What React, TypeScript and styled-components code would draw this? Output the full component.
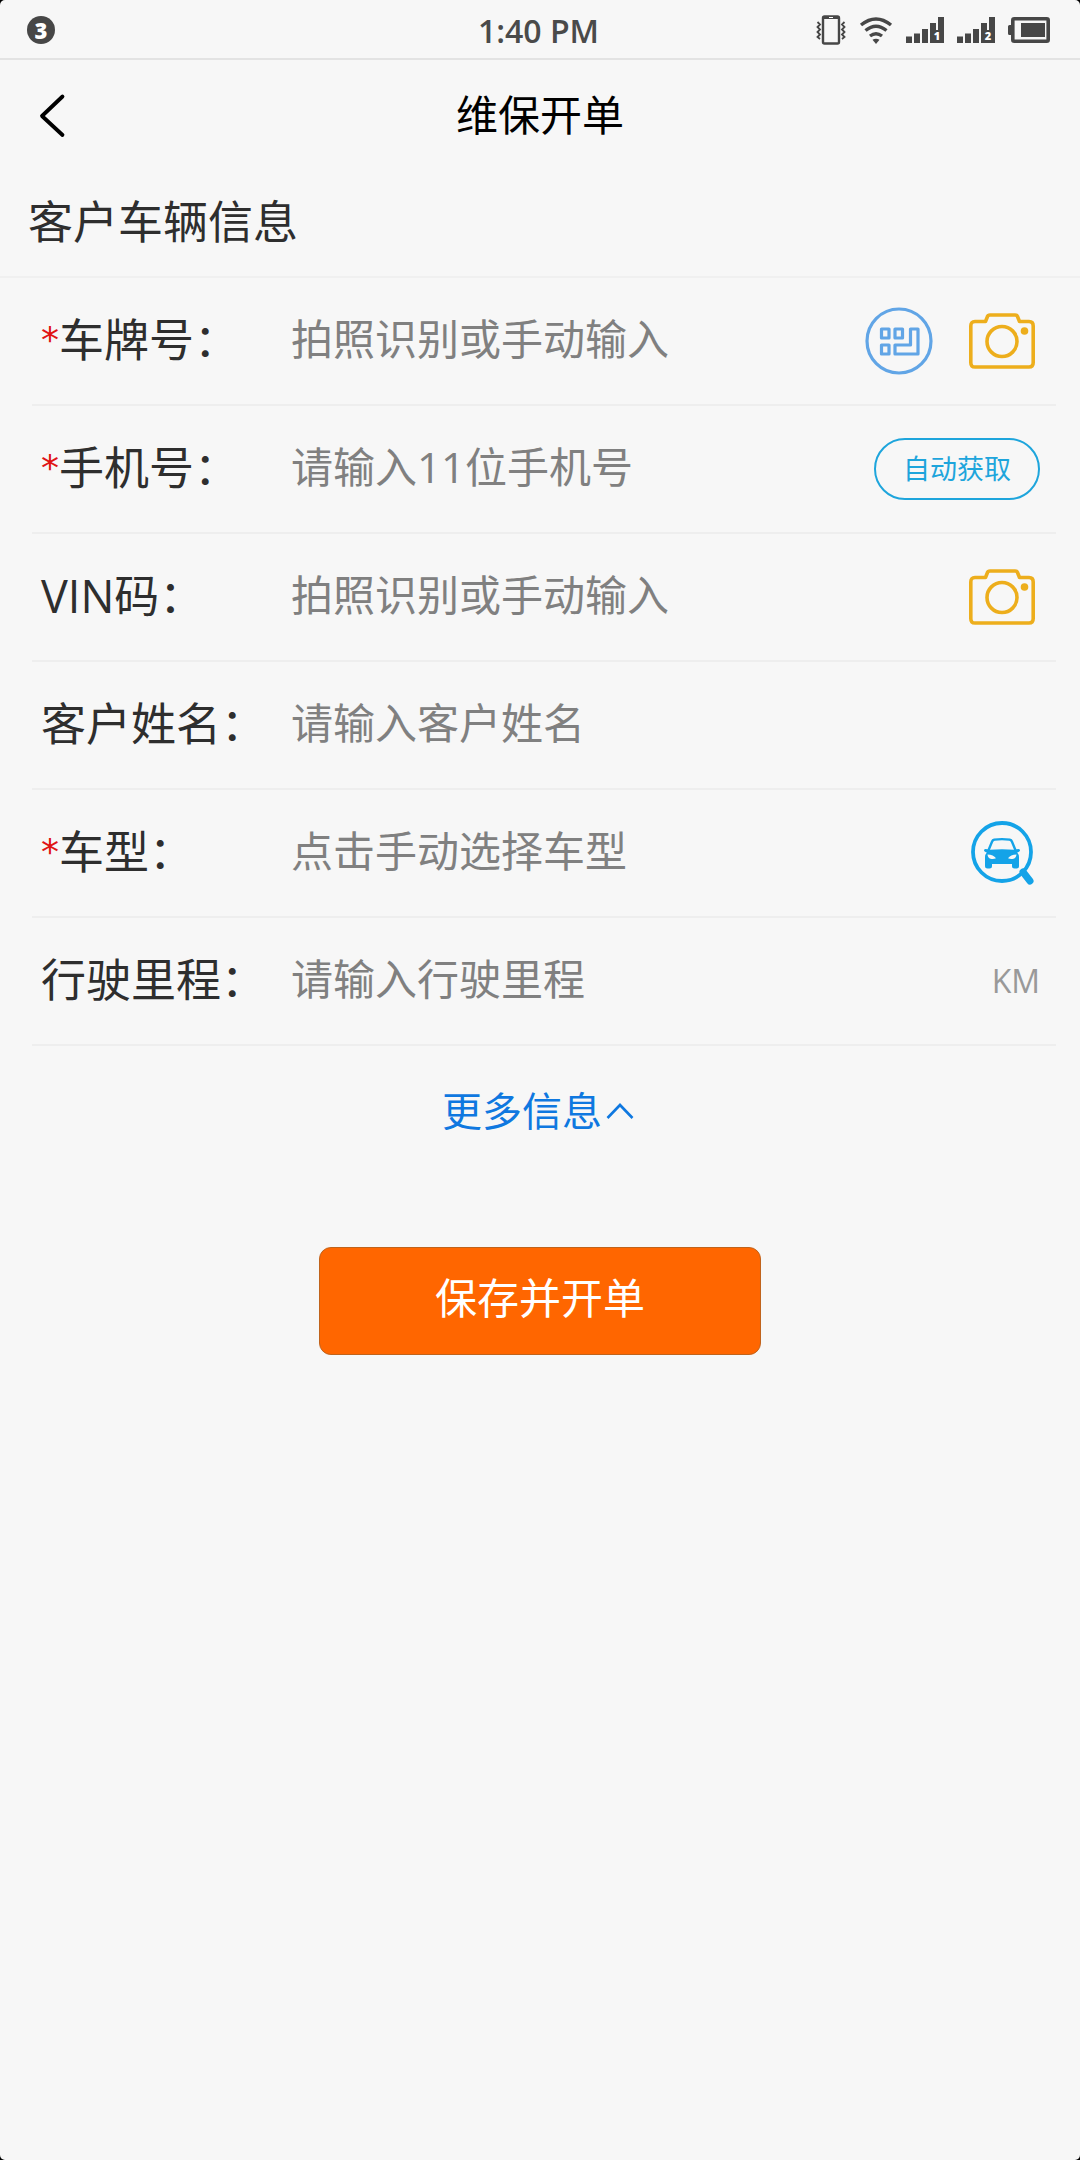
import React, { useState } from 'react';
import styled, { createGlobalStyle } from 'styled-components';

const GlobalStyle = createGlobalStyle`
  * { box-sizing: border-box; }
  html { background: #000; }
  body { margin: 0; font-family: "Open Sans", "Noto Sans CJK SC", sans-serif; }
  button, input { font: inherit; margin: 0; padding: 0; border: 0; background: none; }
  button { cursor: pointer; }
  svg { display: block; flex: none; }
`;

const Screen = styled.main`
  min-height: 100vh;
  background: #f7f7f7;
  border-radius: 5px;
  color: #2e2e2e;
`;

const StatusBar = styled.div`
  display: grid;
  grid-template-columns: 1fr auto 1fr;
  align-items: center;
  height: 60px;
  padding: 2px 30px 0 27px;
  border-bottom: 2px solid #e3e3e3;
  color: #4a4a4a;
`;

const NoticeCount = styled.span`
  display: grid;
  place-items: center;
  width: 28px;
  height: 28px;
  border-radius: 50%;
  background: #474747;
  color: #fff;
  font-size: 22px;
  font-weight: 800;
  line-height: 28px;
`;

const Clock = styled.time`
  padding-top: 2px;
  font-size: 32px;
  font-weight: 600;
  line-height: 44px;
`;

const StatusIcons = styled.div`
  display: flex;
  justify-content: flex-end;
  align-items: center;
  gap: 13px;
`;

const Header = styled.header`
  display: grid;
  grid-template-columns: 1fr auto 1fr;
  align-items: center;
  height: 110px;
  padding: 0 32px;
`;

const BackButton = styled.button`
  justify-self: start;
  color: #000;
`;

const Title = styled.h1`
  margin: 0;
  color: #000;
  font-size: 42px;
  font-weight: 400;
  line-height: 60px;
`;

const SectionTitle = styled.h2`
  margin: 0;
  padding: 19px 28px 21px;
  border-bottom: 2px solid #f0f0f0;
  font-size: 45px;
  font-weight: 400;
  line-height: 66px;
`;

const Form = styled.form`
  display: flex;
  flex-direction: column;
`;

const Row = styled.div`
  display: flex;
  align-items: center;
  height: 128px;
  margin: 0 24px 0 32px;
  padding: 0 16px 0 9px;
  border-bottom: 2px solid #eee;
`;

const Label = styled.label`
  width: 250px;
  flex: none;
  padding-bottom: 2px;
  font-size: 45px;
  line-height: 66px;
  white-space: nowrap;
`;

const Required = styled.span`
  color: #e01414;
  font-family: "DejaVu Sans", sans-serif;
  font-size: 36px;
  line-height: 1;
  vertical-align: 5px;
`;

const Field = styled.input`
  flex: 1;
  min-width: 0;
  height: 66px;
  padding-bottom: 5px;
  color: #2e2e2e;
  font-size: 42px;
  outline: none;
  &::placeholder { color: #808080; opacity: 1; }
`;

const Actions = styled.div<{ $inset?: boolean }>`
  display: flex;
  align-items: center;
  gap: 36px;
  padding-right: ${(p) => (p.$inset ? '5px' : '0')};
`;

const IconButton = styled.button`
  display: block;
`;

const PillButton = styled.button`
  height: 62px;
  padding: 0 27px;
  border: 2px solid #1ea5dc;
  border-radius: 31px;
  color: #1ea5dc;
  font-size: 27px;
  line-height: 40px;
`;

const Unit = styled.span`
  color: #999;
  font-size: 32px;
  line-height: 44px;
`;

const MoreButton = styled.button`
  display: flex;
  align-items: center;
  align-self: center;
  gap: 4px;
  margin-top: 35px;
  padding-right: 4px;
  color: #0f78e0;
  font-size: 40px;
  line-height: 60px;
`;

const SubmitButton = styled.button`
  align-self: center;
  width: 41%;
  height: 108px;
  margin-top: 106px;
  padding-bottom: 7px;
  border: 1px solid #c0631c;
  border-radius: 12px;
  background: #f60;
  color: #fff;
  font-size: 42px;
  line-height: 60px;
`;

const VibrateIcon = () => (
  <svg width="30" height="30" viewBox="0 0 30 30" fill="none" stroke="#474747" aria-hidden="true">
    <rect x="7" y="1.5" width="16" height="27" rx="1.5" strokeWidth="2.4" />
    <path d="M7 2.5h16" strokeWidth="3" />
    <path d="M13 2.5h4" stroke="#fff" strokeWidth="1" />
    <path d="M1.5 7l2.5 2.5L1.5 12 4 14.5 1.5 17 4 19.5 1.5 22 4 24M28.5 7 26 9.500l2.500 2.500-2.500 2.500 2.500 2.500-2.500 2.500 2.500 2.500-2.500 2" strokeWidth="1.8" />
  </svg>
);

const WifiIcon = () => (
  <svg width="34" height="28" viewBox="0 0 34 28" fill="none" stroke="#474747" strokeWidth="3.4" aria-hidden="true">
    <path d="M2 9Q17-3 32 9M6.500 14.500Q17 6 27.500 14.500M11 20q6-4.500 12 0" />
    <path d="M13.500 23.700q3.500-2 7 0L17 28z" fill="#474747" stroke="none" />
  </svg>
);

const SignalIcon = ({ sim }: { sim: number }) => (
  <svg width="38" height="38" viewBox="0 -6 38 38" fill="#474747" aria-hidden="true">
    <path d="M0 19.500h6V26H0zM8 16.500h6V26H8zM16 12h6v14h-6zM24 6h6v20h-6zM32 0h6v26H26V12h6z" />
    <path d="M31 6v7" stroke="#f7f7f7" strokeWidth="2" />
    <text x="31" y="23" fill="#fff" fontSize="11" fontWeight="800" textAnchor="middle">{sim}</text>
  </svg>
);

const BatteryIcon = () => (
  <svg width="42" height="26" viewBox="0 0 42 26" aria-hidden="true">
    <rect x="4.8" y="1.8" width="35.4" height="22.4" rx="1.5" fill="none" stroke="#474747" strokeWidth="3.6" />
    <path d="M3 8H1.500Q0 8 0 9.500v7Q0 18 1.500 18H3zM13 6h24v14H13z" fill="#474747" />
  </svg>
);

const BackIcon = () => (
  <svg width="40" height="48" viewBox="0 0 40 48" fill="none" stroke="currentColor" strokeWidth="3.8" strokeLinecap="round" strokeLinejoin="round" aria-hidden="true">
    <path d="M30.500 5.500 10 25l20.500 19" />
  </svg>
);

const PlateIcon = () => (
  <svg width="68" height="68" viewBox="0 0 68 68" fill="none" stroke="#61a5e6" strokeWidth="3.2" strokeLinejoin="round" aria-hidden="true">
    <circle cx="34" cy="34" r="32" />
    <path d="M16.500 22h7.500v9h-7.500zM30 22h7.500v9H30zM16.500 38h7.500v9h-7.500zM45.500 22H53v25H30v-9h15.500z" />
  </svg>
);

const CameraIcon = () => (
  <svg width="66" height="56" viewBox="0 0 66 56" fill="none" stroke="#edae1c" strokeWidth="3.6" strokeLinejoin="round" aria-hidden="true">
    <path d="M16.500 8.500 18.500 3.500Q19 2 21 2h25q2 0 2.500 1.500l2 5H60q4.200 0 4.200 4.500v36.500Q64.200 54 60 54H6q-4.200 0-4.200-4.500V13Q1.800 8.500 6 8.500z" />
    <circle cx="33" cy="28.5" r="15" />
    <circle cx="55.5" cy="18" r="3.8" fill="#edae1c" stroke="none" />
  </svg>
);

const CarSearchIcon = () => (
  <svg width="64" height="64" viewBox="0 0 64 64" fill="none" stroke="#14a3e8" aria-hidden="true">
    <circle cx="31" cy="31" r="29" strokeWidth="3.8" />
    <path d="m52 51 7 9" strokeWidth="7" strokeLinecap="round" />
    <path fill="#14a3e8" fillRule="evenodd" stroke="none" d="M20 20q.8-2 3-2.400 8-1.200 16 0 2.200.4 3 2.400l3.400 8.300 2.300-.3q1.500.2 1.300 1.600-.3 1.400-2 1.600l-.8.200q1.800 2 1.800 4.600v9q0 2.500-2.500 2.500h-2q-2.500 0-2.500-2.500v-2H21v2q0 2.500-2.500 2.500h-2Q14 47.500 14 45v-9q0-2.600 1.800-4.600l-.8-.2q-1.700-.2-2-1.600-.2-1.400 1.300-1.600l2.300.3zm2.200 1L19 28.800q12-1.300 24 0L39.800 21q-.4-1-1.500-1.200-7.300-1-14.600 0-1.100.2-1.500 1.200zM16.500 33.500q.3 3.500 3 4.200 3 .6 5.500-.4-2.500-3.500-8.500-3.800zm29 0q-.3 3.500-3 4.200-3 .6-5.500-.4 2.500-3.500 8.500-3.800z" />
  </svg>
);

const ChevronUp = () => (
  <svg width="28" height="18" viewBox="0 0 28 18" fill="none" stroke="currentColor" strokeWidth="2.6" aria-hidden="true">
    <path d="M1.500 16 14 3l12.500 13" />
  </svg>
);

type FieldRowProps = {
  id: string;
  label: string;
  placeholder: string;
  required?: boolean;
  inset?: boolean;
  children?: React.ReactNode;
};

const FieldRow = ({ id, label, placeholder, required, inset, children }: FieldRowProps) => {
  const [value, setValue] = useState('');
  return (
    <Row>
      <Label htmlFor={id}>
        {required && <Required>*</Required>}
        {label}：
      </Label>
      <Field id={id} value={value} placeholder={placeholder} required={required} onChange={(e) => setValue(e.target.value)} />
      {children && <Actions $inset={inset}>{children}</Actions>}
    </Row>
  );
};

export default function App() {
  return (
    <>
      <GlobalStyle />
      <Screen lang="zh-CN">
        <StatusBar>
          <NoticeCount>3</NoticeCount>
          <Clock>1:40 PM</Clock>
          <StatusIcons>
            <VibrateIcon />
            <WifiIcon />
            <SignalIcon sim={1} />
            <SignalIcon sim={2} />
            <BatteryIcon />
          </StatusIcons>
        </StatusBar>
        <Header>
          <BackButton type="button" aria-label="返回"><BackIcon /></BackButton>
          <Title>维保开单</Title>
        </Header>
        <SectionTitle>客户车辆信息</SectionTitle>
        <Form onSubmit={(e) => e.preventDefault()}>
          <FieldRow id="plate" label="车牌号" placeholder="拍照识别或手动输入" required inset>
            <IconButton type="button" aria-label="键盘输入"><PlateIcon /></IconButton>
            <IconButton type="button" aria-label="拍照"><CameraIcon /></IconButton>
          </FieldRow>
          <FieldRow id="phone" label="手机号" placeholder="请输入11位手机号" required>
            <PillButton type="button">自动获取</PillButton>
          </FieldRow>
          <FieldRow id="vin" label="VIN码" placeholder="拍照识别或手动输入" inset>
            <IconButton type="button" aria-label="拍照"><CameraIcon /></IconButton>
          </FieldRow>
          <FieldRow id="name" label="客户姓名" placeholder="请输入客户姓名" />
          <FieldRow id="model" label="车型" placeholder="点击手动选择车型" required inset>
            <IconButton type="button" aria-label="选择车型"><CarSearchIcon /></IconButton>
          </FieldRow>
          <FieldRow id="mileage" label="行驶里程" placeholder="请输入行驶里程">
            <Unit>KM</Unit>
          </FieldRow>
          <MoreButton type="button">更多信息<ChevronUp /></MoreButton>
          <SubmitButton type="submit">保存并开单</SubmitButton>
        </Form>
      </Screen>
    </>
  );
}
